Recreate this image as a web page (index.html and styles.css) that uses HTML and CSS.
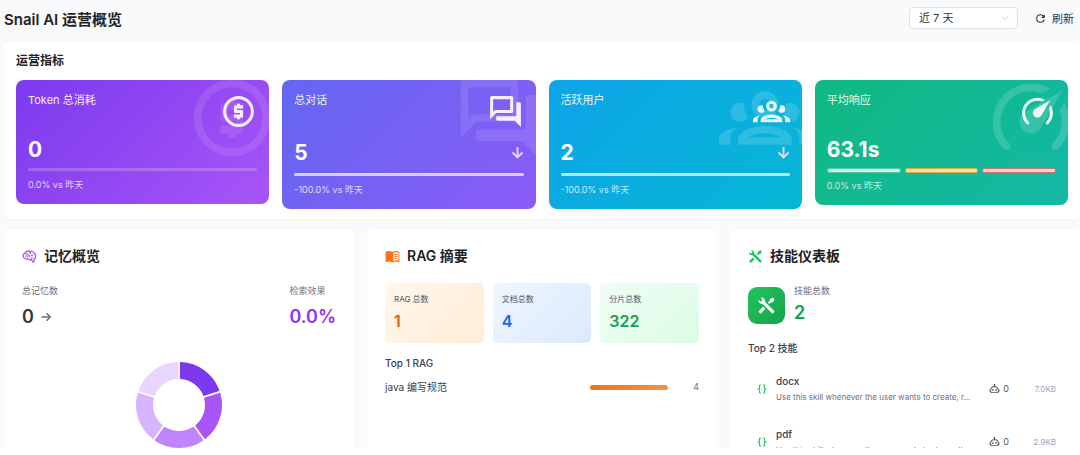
FILE: index.html
```html
<!DOCTYPE html>
<html lang="zh-CN">
<head>
    <meta charset="UTF-8">
    <meta name="viewport" content="width=device-width, initial-scale=1.0">
    <title>Snail AI 运营概览</title>
    <link rel="stylesheet" href="styles.css">
</head>
<body>
    <!-- Shared icons -->
    <svg class="sprite" aria-hidden="true">
        <symbol id="icon-dollar" viewBox="0 0 24 24">
            <path fill-rule="evenodd" d="M12 2a10 10 0 1 0 0 20 10 10 0 0 0 0-20zm0 2a8 8 0 1 1 0 16 8 8 0 0 1 0-16zM11 17h2v-1h1c.55 0 1-.45 1-1v-3c0-.55-.45-1-1-1h-3v-1h4V8h-2V7h-2v1h-1c-.55 0-1 .45-1 1v3c0 .55.45 1 1 1h3v1H9v2h2v1z"/>
        </symbol>
        <symbol id="icon-chat" viewBox="0 0 24 24">
            <path d="M15 4v7H5.17L4 12.17V4h11m1-2H3a1 1 0 0 0-1 1v14l4-4h10a1 1 0 0 0 1-1V3a1 1 0 0 0-1-1m5 4h-2v9H6v2a1 1 0 0 0 1 1h11l4 4V7a1 1 0 0 0-1-1z"/>
        </symbol>
        <symbol id="icon-users" viewBox="0 0 24 24">
            <path d="M12,5A3.5,3.5 0 0,0 8.5,8.5A3.5,3.5 0 0,0 12,12A3.5,3.5 0 0,0 15.5,8.5A3.5,3.5 0 0,0 12,5M12,7A1.5,1.5 0 0,1 13.5,8.5A1.5,1.5 0 0,1 12,10A1.5,1.5 0 0,1 10.5,8.5A1.5,1.5 0 0,1 12,7M5.5,8A2.5,2.5 0 0,0 3,10.5C3,11.44 3.53,12.25 4.29,12.68C4.65,12.88 5.06,13 5.5,13C5.94,13 6.35,12.88 6.71,12.68C7.08,12.47 7.39,12.17 7.62,11.81C6.89,10.86 6.5,9.7 6.5,8.5C6.5,8.41 6.5,8.31 6.5,8.22C6.2,8.08 5.86,8 5.5,8M18.5,8C18.14,8 17.8,8.08 17.5,8.22C17.5,8.31 17.5,8.41 17.5,8.5C17.5,9.7 17.11,10.86 16.38,11.81C16.5,12 16.63,12.15 16.78,12.3C16.94,12.45 17.1,12.58 17.29,12.68C17.65,12.88 18.06,13 18.5,13C18.94,13 19.35,12.88 19.71,12.68C20.47,12.25 21,11.44 21,10.5A2.5,2.5 0 0,0 18.5,8M12,14C9.66,14 5,15.17 5,17.5V19H19V17.5C19,15.17 14.34,14 12,14M4.71,14.55C2.78,14.78 0,15.76 0,17.5V19H3V17.07C3,16.06 3.69,15.22 4.71,14.55M19.29,14.55C20.31,15.22 21,16.06 21,17.07V19H24V17.5C24,15.76 21.22,14.78 19.29,14.55M12,16C13.53,16 15.24,16.5 16.23,17H7.77C8.76,16.5 10.47,16 12,16Z"/>
        </symbol>
        <symbol id="icon-speed" viewBox="0 0 24 24">
            <path d="M12,16A3,3 0 0,1 9,13C9,11.88 9.61,10.9 10.5,10.39L20.21,4.77L14.68,14.35C14.18,15.33 13.17,16 12,16M12,3C13.81,3 15.5,3.5 16.97,4.32L14.87,5.53C14,5.19 13,5 12,5A8,8 0 0,0 4,13C4,15.21 4.89,17.21 6.34,18.65H6.35C6.74,19.04 6.74,19.67 6.35,20.06C5.96,20.45 5.32,20.45 4.93,20.07C3.12,18.26 2,15.76 2,13A10,10 0 0,1 12,3M22,13C22,15.76 20.88,18.26 19.07,20.07C18.68,20.45 18.05,20.45 17.66,20.06C17.27,19.67 17.27,19.04 17.66,18.65C19.11,17.2 20,15.21 20,13C20,12 19.81,11 19.46,10.1L20.67,8C21.5,9.5 22,11.18 22,13Z"/>
        </symbol>
        <symbol id="icon-down" viewBox="0 0 24 24">
            <path d="M12 3v17M4 12l8 8 8-8" fill="none" stroke="currentColor" stroke-width="3"/>
        </symbol>
        <symbol id="icon-tools" viewBox="0 0 24 24">
            <path d="M21.71 20.29L20.29 21.71A1 1 0 0 1 18.88 21.71L7 9.85A3.81 3.81 0 0 1 6 10A4 4 0 0 1 2.22 4.7L4.76 7.24L5.29 6.71L6.71 5.29L7.24 4.76L4.7 2.22A4 4 0 0 1 10 6A3.81 3.81 0 0 1 9.85 7L21.71 18.88A1 1 0 0 1 21.71 20.29M2.29 18.88A1 1 0 0 0 2.29 20.29L3.71 21.71A1 1 0 0 0 5.12 21.71L10.59 16.25L7.76 13.42M20 2L16 4V6L13.83 8.17L15.83 10.17L18 8H20L22 4Z"/>
        </symbol>
        <symbol id="icon-braces" viewBox="0 0 24 24">
            <path d="M8,3A2,2 0 0,0 6,5V9A2,2 0 0,1 4,11H3V13H4A2,2 0 0,1 6,15V19A2,2 0 0,0 8,21H10V19H8V14A2,2 0 0,0 6,12A2,2 0 0,0 8,10V5H10V3M16,3A2,2 0 0,1 18,5V9A2,2 0 0,0 20,11H21V13H20A2,2 0 0,0 18,15V19A2,2 0 0,1 16,21H14V19H16V14A2,2 0 0,1 18,12A2,2 0 0,1 16,10V5H14V3H16Z"/>
        </symbol>
        <symbol id="icon-robot" viewBox="0 0 24 24">
            <path d="M17.5 15.5C17.5 16.61 16.61 17.5 15.5 17.5S13.5 16.61 13.5 15.5 14.4 13.5 15.5 13.5 17.5 14.4 17.5 15.5M8.5 13.5C7.4 13.5 6.5 14.4 6.5 15.5S7.4 17.5 8.5 17.5 10.5 16.61 10.5 15.5 9.61 13.5 8.5 13.5M23 15V18C23 18.55 22.55 19 22 19H21V20C21 21.11 20.11 22 19 22H5C3.9 22 3 21.11 3 20V19H2C1.45 19 1 18.55 1 18V15C1 14.45 1.45 14 2 14H3C3 10.13 6.13 7 10 7H11V5.73C10.4 5.39 10 4.74 10 4C10 2.9 10.9 2 12 2S14 2.9 14 4C14 4.74 13.6 5.39 13 5.73V7H14C17.87 7 21 10.13 21 14H22C22.55 14 23 14.45 23 15M21 16H19V14C19 11.24 16.76 9 14 9H10C7.24 9 5 11.24 5 14V16H3V17H5V20H19V17H21V16Z"/>
        </symbol>
    </svg>

    <main class="dashboard">
        <header class="page-header">
            <h1>Snail AI 运营概览</h1>
            <div class="actions">
                <div class="select-wrap">
                    <select class="range-select" aria-label="时间范围">
                        <option>近 7 天</option>
                    </select>
                    <svg class="chevron" viewBox="0 0 12 12"><path d="M2 4l4 4 4-4" fill="none" stroke="currentColor"/></svg>
                </div>
                <button type="button" class="refresh-btn">
                    <svg viewBox="0 0 24 24"><path d="M17.65 6.35A7.96 7.96 0 0 0 12 4a8 8 0 1 0 7.730 10h-2.080A6 6 0 1 1 12 6c1.660 0 3.140.690 4.220 1.780L13 11h7V4z"/></svg>
                    刷新
                </button>
            </div>
        </header>

        <section class="panel metrics">
            <h2>运营指标</h2>
            <div class="metric-grid">
                <article class="metric token">
                    <svg class="metric-bg"><use href="#icon-dollar"/></svg>
                    <svg class="metric-icon"><use href="#icon-dollar"/></svg>
                    <h3>Token 总消耗</h3>
                    <div class="metric-value"><strong>0</strong></div>
                    <div class="line faint"></div>
                    <p>0.0% vs 昨天</p>
                </article>
                <article class="metric chat">
                    <svg class="metric-bg"><use href="#icon-chat"/></svg>
                    <svg class="metric-icon"><use href="#icon-chat"/></svg>
                    <h3>总对话</h3>
                    <div class="metric-value trend"><strong>5</strong><svg><use href="#icon-down"/></svg></div>
                    <div class="line"></div>
                    <p>-100.0% vs 昨天</p>
                </article>
                <article class="metric users">
                    <svg class="metric-bg"><use href="#icon-users"/></svg>
                    <svg class="metric-icon"><use href="#icon-users"/></svg>
                    <h3>活跃用户</h3>
                    <div class="metric-value trend"><strong>2</strong><svg><use href="#icon-down"/></svg></div>
                    <div class="line"></div>
                    <p>-100.0% vs 昨天</p>
                </article>
                <article class="metric speed">
                    <svg class="metric-bg"><use href="#icon-speed"/></svg>
                    <svg class="metric-icon"><use href="#icon-speed"/></svg>
                    <h3>平均响应</h3>
                    <div class="metric-value"><strong>63.1s</strong></div>
                    <div class="segments"><i class="good"></i><i class="warn"></i><i class="bad"></i></div>
                    <p>0.0% vs 昨天</p>
                </article>
            </div>
        </section>

        <div class="columns">
            <section class="panel card">
                <h2 class="card-title memory-title">
                    <svg viewBox="0 0 24 24"><path d="M9 4a3.500 3.500 0 0 0-4 2.500A4 4 0 0 0 2 11c0 2 1 3.500 3 4 1 1.500 3 1.500 4.500.800C11 17.500 13 17.500 15 17l2.500 4 1.500-.500v-3.600c2-.900 3-2.500 3-4.900 0-2.500-1-4-2.500-5C18 4 15.500 3 13 4c-1-1-3-1-4 0zM13 4c-1 1.500 0 3 1.500 3M5 7c1 0 2 .500 2.500 1.500M10 7.500c-1 .500-1 2 .500 2.500s2 2 .500 3M5.500 11.500c1.500-1 3 0 3 1.500M14 10.500c2 0 2.500-1 4-1M14.500 17c0-2 1-3 3-3"/></svg>
                    记忆概览
                </h2>
                <div class="memory-stats">
                    <div>
                        <p class="label">总记忆数</p>
                        <div class="big-value">0 <svg viewBox="0 0 24 24"><path d="M3 12h17M13 4.500l7.500 7.500-7.500 7.500"/></svg></div>
                    </div>
                    <div>
                        <p class="label">检索效果</p>
                        <div class="big-value purple">0.0%</div>
                    </div>
                </div>
                <svg class="donut" viewBox="-50 -50 100 100">
                    <g id="donut"></g>
                </svg>
            </section>

            <section class="panel card">
                <h2 class="card-title rag-title">
                    <svg viewBox="0 0 24 24"><path fill-rule="evenodd" d="M1 4.500Q6 2 12 4.500 18 2 23 4.500V21Q18 19 12 21.500 6 19 1 21zM13.500 6v12.800q4-1.300 8-.600V5.700q-4-.900-8 .300z"/><path d="M15 8.500q2.500-.700 5-.300v1.500q-2.500-.400-5 .300zM15 11.700q2.500-.700 5-.300v1.500q-2.500-.400-5 .300zM15 14.900q2.500-.700 5-.300v1.500q-2.500-.400-5 .300z"/></svg>
                    RAG 摘要
                </h2>
                <div class="rag-grid">
                    <div class="rag-box orange"><p>RAG 总数</p><strong>1</strong></div>
                    <div class="rag-box blue"><p>文档总数</p><strong>4</strong></div>
                    <div class="rag-box green"><p>分片总数</p><strong>322</strong></div>
                </div>
                <h3 class="sub-title">Top 1 RAG</h3>
                <div class="rag-row">
                    <span class="rag-name">java 编写规范</span>
                    <span class="rag-bar"></span>
                    <span class="rag-count">4</span>
                </div>
            </section>

            <section class="panel card">
                <h2 class="card-title skill-title">
                    <svg><use href="#icon-tools"/></svg>
                    技能仪表板
                </h2>
                <div class="skill-total">
                    <div class="skill-badge"><svg><use href="#icon-tools"/></svg></div>
                    <div>
                        <p class="label">技能总数</p>
                        <strong>2</strong>
                    </div>
                </div>
                <h3 class="sub-title">Top 2 技能</h3>
                <ul class="skill-list">
                    <li>
                        <svg class="braces"><use href="#icon-braces"/></svg>
                        <div class="skill-text">
                            <h4>docx</h4>
                            <p>Use this skill whenever the user wants to create, r...</p>
                        </div>
                        <span class="skill-uses"><svg><use href="#icon-robot"/></svg>0</span>
                        <span class="skill-size">7.0KB</span>
                    </li>
                    <li>
                        <svg class="braces"><use href="#icon-braces"/></svg>
                        <div class="skill-text">
                            <h4>pdf</h4>
                            <p>Use this skill whenever the user wants to do anyth...</p>
                        </div>
                        <span class="skill-uses"><svg><use href="#icon-robot"/></svg>0</span>
                        <span class="skill-size">2.9KB</span>
                    </li>
                </ul>
            </section>
        </div>
    </main>

    <script src="script.js"></script>
</body>
</html>
```
FILE: styles.css
```css
* {
    margin: 0;
    padding: 0;
    box-sizing: border-box;
}

body {
    height: 100vh;
    padding-bottom: 7px;
    overflow: hidden;
    font-family: Inter, 'Noto Sans CJK SC', sans-serif;
    font-size: 12px;
    color: #1f2225;
    background: #fff;
}

svg {
    fill: currentColor;
    flex-shrink: 0;
}

.sprite {
    display: none;
}

.dashboard {
    height: 100%;
    padding-left: 4px;
    overflow: hidden;
    background: #f8fafc;
}

/* Header */
.page-header {
    display: flex;
    align-items: center;
    justify-content: space-between;
    height: 42px;
    padding: 0 6px 6px 0;
}

.page-header h1 {
    font-size: 15px;
    font-weight: 600;
}

.actions {
    display: flex;
    align-items: center;
    gap: 16px;
}

.select-wrap {
    position: relative;
}

.range-select {
    appearance: none;
    width: 109px;
    height: 22px;
    padding: 0 9px;
    border: 1px solid #e0e0e6;
    border-radius: 4px;
    background: #fff;
    font: inherit;
    font-size: 11px;
    color: #333639;
}

.chevron {
    position: absolute;
    top: 6px;
    right: 8px;
    width: 10px;
    height: 10px;
    color: #c2c2c2;
}

.refresh-btn {
    display: flex;
    align-items: center;
    gap: 5px;
    border: none;
    background: none;
    font: inherit;
    font-size: 11px;
    color: #333639;
    cursor: pointer;
}

.refresh-btn svg {
    width: 13px;
    height: 13px;
}

.panel {
    background: #fff;
    border-radius: 6px;
    box-shadow: 0 1px 2px rgba(15, 23, 42, 0.03);
}

/* Metric cards */
.metrics {
    padding: 10px 12px;
}

.metrics h2 {
    margin-bottom: 10px;
    font-size: 12px;
    font-weight: 600;
    line-height: 18px;
}

.metric-grid {
    display: grid;
    grid-template-columns: repeat(4, 1fr);
    align-items: start;
    gap: 13px;
}

.metric {
    position: relative;
    padding: 12px;
    border-radius: 8px;
    overflow: hidden;
    color: #fff;
}

.metric.token { background: linear-gradient(135deg, #7c3aed, #a855f7); }
.metric.chat { background: linear-gradient(135deg, #6366f1, #8b5cf6); }
.metric.users { background: linear-gradient(135deg, #0ea5e9, #06b6d4); }
.metric.speed { background: linear-gradient(135deg, #10b981, #14b8a6); }

.metric-bg {
    position: absolute;
    top: -8px;
    right: -9px;
    width: 92px;
    height: 92px;
    opacity: 0.15;
}

.token .metric-bg,
.chat .metric-bg {
    opacity: 0.1;
}

.metric-icon {
    position: absolute;
    top: 13px;
    right: 12px;
    width: 37px;
    height: 37px;
    opacity: 0.9;
}

.metric h3 {
    font-size: 11px;
    font-weight: 400;
    line-height: 16px;
    opacity: 0.9;
}

.metric-value {
    display: flex;
    align-items: center;
    justify-content: space-between;
    height: 28px;
    margin: 27px 0 5px;
}

.metric-value.trend {
    height: 32px;
    margin-top: 28px;
}

.metric-value strong {
    font-size: 21px;
    font-weight: 700;
}

.metric-value svg {
    width: 15px;
    height: 15px;
    margin-right: -1px;
    color: #fbcfe8;
}

.line {
    height: 3px;
    margin-bottom: 7px;
    border-radius: 2px;
    background: rgba(255, 255, 255, 0.7);
}

.line.faint {
    background: rgba(255, 255, 255, 0.2);
}

.segments {
    display: flex;
    gap: 4px;
    margin-bottom: 6px;
}

.segments i {
    flex: 1;
    height: 5px;
    border: 1px solid;
    border-radius: 3px;
    background: rgba(255, 255, 255, 0.8);
}

.segments .good { border-color: #4cd0a4; }
.segments .warn { border-color: #d9b13c; background: #f0dfb4; }
.segments .bad { border-color: #d3746c; background: #f2d5d2; }

.metric p {
    font-size: 9px;
    line-height: 14px;
    opacity: 0.75;
}

/* Lower cards */
.columns {
    display: grid;
    grid-template-columns: repeat(3, 1fr);
    gap: 13px;
    margin-top: 11px;
}

.card {
    min-width: 0;
    padding: 16px 18px;
}

.card-title {
    display: flex;
    align-items: center;
    gap: 7px;
    margin-bottom: 17px;
    font-size: 14px;
    font-weight: 600;
    line-height: 20px;
}

.card-title svg {
    width: 15px;
    height: 15px;
}

.memory-title svg {
    fill: none;
    stroke: #a855f7;
    stroke-width: 2;
}

.rag-title svg { color: #f97316; }
.skill-title svg { color: #22c55e; }

.label {
    font-size: 9px;
    line-height: 16px;
    color: #6b7280;
}

.memory-stats {
    display: flex;
    justify-content: space-between;
}

.big-value {
    display: flex;
    align-items: center;
    gap: 6px;
    font-size: 18px;
    font-weight: 600;
    line-height: 36px;
    color: #333639;
}

.big-value svg {
    width: 12px;
    height: 12px;
    fill: none;
    stroke: #6b7280;
    stroke-width: 3;
}

.big-value.purple {
    color: #9333ea;
}

.donut {
    display: block;
    width: 100px;
    height: 100px;
    margin: 20px auto 0;
}

/* RAG */
.rag-grid {
    display: grid;
    grid-template-columns: repeat(3, 1fr);
    gap: 9px;
    margin-bottom: 12px;
}

.rag-box {
    padding: 8px 9px;
    border-radius: 5px;
}

.rag-box p {
    font-size: 8px;
    line-height: 16px;
    color: #4b5563;
}

.rag-box strong {
    display: block;
    font-size: 16px;
    font-weight: 600;
    line-height: 28px;
}

.rag-box.orange { background: linear-gradient(135deg, #fff7ed, #ffedd5); }
.rag-box.blue { background: linear-gradient(135deg, #eff6ff, #dbeafe); }
.rag-box.green { background: linear-gradient(135deg, #f0fdf4, #dcfce7); }
.rag-box.orange strong { color: #ea580c; }
.rag-box.blue strong { color: #2563eb; }
.rag-box.green strong { color: #16a34a; }

.sub-title {
    font-size: 10px;
    font-weight: 500;
    line-height: 16px;
    color: #374151;
}

.rag-row {
    display: flex;
    align-items: center;
    margin-top: 8px;
    line-height: 16px;
}

.rag-name {
    flex: 1;
    font-size: 10px;
    color: #374151;
}

.rag-bar {
    width: 78px;
    height: 5px;
    border-radius: 3px;
    background: linear-gradient(90deg, #ea7422, #f59245);
}

.rag-count {
    width: 31px;
    font-size: 9px;
    text-align: right;
    color: #6b7280;
}

/* Skills */
.skill-total {
    display: flex;
    align-items: center;
    gap: 9px;
    margin-bottom: 13px;
}

.skill-badge {
    display: grid;
    place-items: center;
    width: 37px;
    height: 37px;
    border-radius: 9px;
    background: linear-gradient(135deg, #22c55e, #16a34a);
    color: #fff;
}

.skill-badge svg {
    width: 19px;
    height: 19px;
}

.skill-total strong {
    display: block;
    font-size: 18px;
    font-weight: 600;
    line-height: 28px;
    color: #16a34a;
}

.skill-list {
    list-style: none;
    margin-top: 6px;
}

.skill-list li {
    display: flex;
    align-items: center;
    height: 53px;
    padding: 0 6px 0 8px;
}

.braces {
    width: 12px;
    height: 12px;
    color: #22c55e;
}

.skill-text {
    flex: 1;
    min-width: 0;
    margin-left: 8px;
}

.skill-text h4 {
    font-size: 10px;
    font-weight: 500;
    line-height: 16px;
    color: #374151;
}

.skill-text p {
    overflow: hidden;
    font-size: 8px;
    line-height: 16px;
    color: #6b7280;
    text-overflow: ellipsis;
    white-space: nowrap;
}

.skill-uses {
    display: flex;
    align-items: center;
    gap: 3px;
    margin-left: 2px;
    font-size: 9px;
    color: #4b5563;
}

.skill-uses svg {
    width: 11px;
    height: 11px;
}

.skill-size {
    width: 47px;
    font-size: 8px;
    text-align: right;
    color: #9ca3af;
}
```
FILE: script.js
```js
// Memory donut: equal slices, rounded by a thin stroke in the slice colour
const slices = [
    { value: 1, color: '#7c3aed' },
    { value: 1, color: '#a855f7' },
    { value: 1, color: '#c084fc' },
    { value: 1, color: '#d8b4fe' },
    { value: 1, color: '#e9d5ff' }
];

const outer = 42;
const inner = 27;
const gap = 1.9;
const total = slices.reduce((sum, s) => sum + s.value, 0);
let angle = -Math.PI / 2;

function point(radius, a) {
    return (radius * Math.cos(a)).toFixed(2) + ' ' + (radius * Math.sin(a)).toFixed(2);
}

slices.forEach(function(slice) {
    const end = angle + (slice.value / total) * Math.PI * 2;
    const path = document.createElementNS('http://www.w3.org/2000/svg', 'path');
    const o = gap / outer;
    const i = gap / inner;

    path.setAttribute('d',
        'M' + point(outer, angle + o) +
        'A' + outer + ' ' + outer + ' 0 0 1 ' + point(outer, end - o) +
        'L' + point(inner, end - i) +
        'A' + inner + ' ' + inner + ' 0 0 0 ' + point(inner, angle + i) + 'Z');
    path.setAttribute('fill', slice.color);
    path.setAttribute('stroke', slice.color);
    path.setAttribute('stroke-width', 2);
    path.setAttribute('stroke-linejoin', 'round');
    document.getElementById('donut').appendChild(path);
    angle = end;
});
```
